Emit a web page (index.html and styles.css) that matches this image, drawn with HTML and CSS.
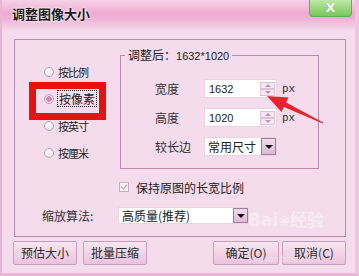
FILE: index.html
```html
<!DOCTYPE html>
<html lang="zh-CN">
<head>
    <meta charset="UTF-8">
    <title>调整图像大小</title>
    <link rel="stylesheet" href="styles.css">
</head>
<body>
<div class="window">
    <!-- Barra de título -->
    <div class="titlebar">
        <span class="title">调整图像大小</span>
        <span class="close">X</span>
    </div>

    <div class="content">
        <div class="group">
            <div class="top">
                <div class="modes">
                    <div class="radio"><span class="dot"></span><span class="txt">按比例</span></div>
                    <div class="radio on"><span class="dot"></span><span class="focus">按像素</span></div>
                    <div class="radio"><span class="dot"></span><span class="txt">按英寸</span></div>
                    <div class="radio"><span class="dot"></span><span class="txt">按厘米</span></div>
                </div>
                <div class="box">
                    <div class="legend">调整后：<span class="num">1632*1020</span></div>
                    <div class="rows">
                        <span class="lbl">宽度</span>
                        <div class="field"><span>1632</span><span class="spin"><i class="up"></i><i class="down"></i></span></div>
                        <span class="unit">px</span>

                        <span class="lbl">高度</span>
                        <div class="field"><span>1020</span><span class="spin"><i class="up"></i><i class="down"></i></span></div>
                        <span class="unit">px</span>

                        <span class="lbl">较长边</span>
                        <div class="select">常用尺寸<span class="drop"></span></div>
                    </div>
                </div>
            </div>
            <div class="keep"><span class="check"></span>保持原图的长宽比例</div>
            <div class="algo">
                <span class="algo-lbl">缩放算法:</span>
                <div class="select wide">高质量(推荐)<span class="drop"></span></div>
            </div>
        </div>

        <div class="buttons">
            <span class="btn">预估大小</span>
            <span class="btn">批量压缩</span>
            <span class="btn ok">确定(O)</span>
            <span class="btn">取消(C)</span>
        </div>
    </div>

    <!-- Anotaciones encima -->
    <div class="mark"></div>
    <svg class="arrow" width="359" height="276" viewBox="0 0 359 276">
        <polygon points="267,96 288.5,97.5 286.1,102.5 323.2,122.6 322.8,123.5 283.9,107 281.5,111.9" fill="#e8232b"/>
    </svg>
    <div class="watermark">
        <span class="wm-big">Bai<span class="paw">❀</span>经验</span>
        <span class="wm-small">jingyan.baidu.com</span>
    </div>
</div>
</body>
</html>
```

FILE: styles.css
```css
/* Estilos generales */
body {
    margin: 0;
    font-family: "Noto Sans CJK SC", "DejaVu Sans", sans-serif;
    font-size: 12px;
    color: #222;
}

.window {
    position: relative;
    width: 359px;
    height: 276px;
    box-sizing: border-box;
    background: #f4dcec;
    border-left: 2px solid #ebb3d4;
    border-right: 4px solid #efc4df;
    border-bottom: 3px solid #ebb6d6;
    overflow: hidden;
}

/* Barra de título */
.titlebar {
    display: flex;
    align-items: flex-start;
    height: 30px;
    background: linear-gradient(to bottom, #f7d3e7 0%, #efaad3 45%, #f0b4d7 65%, #f4d8ea 100%);
}
.title {
    padding: 6px 0 0 10px;
    font-size: 13px;
    font-weight: bold;
    line-height: 16px;
    color: #1a1a1a;
    text-shadow: 0 0 2px #fff, 0 0 3px #fff;
}
.close {
    margin-left: auto;
    margin-right: 3px;
    width: 43px;
    height: 17px;
    box-sizing: border-box;
    border: 1px solid #6da85b;
    border-top: none;
    border-radius: 0 0 4px 4px;
    background: linear-gradient(to bottom, #bde9a6, #78c65a);
    color: #fff;
    font: bold 13px/16px "DejaVu Sans", sans-serif;
    text-align: center;
    text-shadow: 0 0 1px #4b8a3c;
}

/* Contenido */
.content {
    padding: 9px 0 0 12px;
}
.group {
    width: 332px;
    height: 198px;
    box-sizing: border-box;
    border: 1px solid #b98aae;
    padding-top: 15px;
}
.top {
    display: flex;
}

/* Opciones de modo */
.modes {
    width: 105px;
    box-sizing: border-box;
    padding: 3px 0 0 29px;
}
.radio {
    display: flex;
    align-items: center;
    height: 27px;
}
.dot {
    width: 10px;
    height: 10px;
    box-sizing: border-box;
    margin-right: 4px;
    border: 1px solid #b9a5b6;
    border-radius: 50%;
    background: radial-gradient(circle at 40% 35%, #fff, #ead8e5);
}
.radio.on .dot {
    background: radial-gradient(circle, #d77fb6 0 2.5px, #f3e0ec 3px);
}
.txt {
    font-size: 11px;
    letter-spacing: -1px;
}
.focus {
    font-size: 12px;
    line-height: 15px;
    padding: 0 1px;
    outline: 1px dotted #222;
}

/* Grupo "调整后" */
.box {
    width: 199px;
    height: 114px;
    box-sizing: border-box;
    border: 1px solid #b98aae;
}
.legend {
    width: fit-content;
    margin: -8px 0 0 4px;
    padding: 0 3px;
    line-height: 14px;
    background: #f4dcec;
}
.num {
    font-family: "Liberation Sans", sans-serif;
    font-size: 11px;
}
.rows {
    display: grid;
    grid-template-columns: 44px 73px auto;
    grid-auto-rows: 19px;
    row-gap: 10px;
    column-gap: 5px;
    align-items: center;
    margin-top: 16px;
    padding-left: 34px;
}
.lbl {
    color: #333;
}
.field {
    display: flex;
    align-items: center;
    justify-content: space-between;
    height: 19px;
    box-sizing: border-box;
    padding-left: 4px;
    background: #fff;
    border: 1px solid #ead4e2;
    font-family: "Liberation Sans", sans-serif;
    font-size: 11px;
}
.spin {
    display: flex;
    flex-direction: column;
    margin-right: 1px;
}
.spin i {
    position: relative;
    width: 15px;
    height: 7px;
    box-sizing: border-box;
    border: 1px solid #dcc0d4;
    background: #f6e6f0;
}
.spin i::after {
    content: "";
    position: absolute;
    left: 4px;
    top: 1px;
    border-left: 3px solid transparent;
    border-right: 3px solid transparent;
}
.spin .up::after {
    border-bottom: 3px solid #b596ad;
}
.spin .down::after {
    border-top: 3px solid #b596ad;
}
.unit {
    font-family: "Liberation Mono", monospace;
    font-size: 11px;
    color: #333;
}

/* Listas desplegables */
.select {
    display: flex;
    align-items: center;
    justify-content: space-between;
    height: 19px;
    box-sizing: border-box;
    padding-left: 3px;
    background: #fff;
    border: 1px solid #ead4e2;
}
.drop {
    position: relative;
    width: 15px;
    height: 17px;
    box-sizing: border-box;
    border: 1px solid #9f7c9a;
    background: linear-gradient(to bottom, #f2dcec, #ddb8d3);
}
.drop::after {
    content: "";
    position: absolute;
    left: 3px;
    top: 6px;
    border-left: 4px solid transparent;
    border-right: 4px solid transparent;
    border-top: 4px solid #111;
}
.select.wide {
    width: 131px;
    height: 17px;
}
.select.wide .drop {
    height: 15px;
}
.select.wide .drop::after {
    top: 5px;
}

/* Casilla y algoritmo */
.keep {
    display: flex;
    align-items: center;
    height: 14px;
    margin-top: 11px;
    padding-left: 104px;
}
.check {
    position: relative;
    width: 10px;
    height: 10px;
    box-sizing: border-box;
    margin-right: 7px;
    border: 1px solid #c7abc0;
    background: #faf0f6;
}
.check::after {
    content: "";
    position: absolute;
    left: 2px;
    top: 0;
    width: 3px;
    height: 5px;
    border: solid #b99ab1;
    border-width: 0 1px 1px 0;
    transform: rotate(40deg);
}
.algo {
    display: flex;
    align-items: center;
    margin-top: 13px;
    padding-left: 27px;
}
.algo-lbl {
    width: 76px;
    color: #333;
}

/* Botones */
.buttons {
    display: flex;
    gap: 6px;
    width: 333px;
    margin: 4px 0 0 -1px;
}
.btn {
    width: 64px;
    height: 24px;
    box-sizing: border-box;
    border: 1px solid #c59fbb;
    border-radius: 2px;
    background: linear-gradient(to bottom, #f9e6f1, #ebc3de);
    text-align: center;
    line-height: 22px;
    color: #2a2a2a;
}
.btn.ok {
    width: 66px;
    margin-left: auto;
}
.buttons .btn:last-child {
    margin-left: -3px;
}

/* Anotaciones */
.mark {
    position: absolute;
    left: 27px;
    top: 82px;
    width: 77px;
    height: 38px;
    box-sizing: border-box;
    border: 7px solid #e51212;
}
.arrow {
    position: absolute;
    left: -2px;
    top: 0;
    pointer-events: none;
}
.watermark {
    position: absolute;
    left: 246px;
    top: 210px;
    display: flex;
    flex-direction: column;
    align-items: center;
    color: #fff;
    opacity: 0.4;
    pointer-events: none;
}
.wm-big {
    font: bold 17px/20px "DejaVu Sans", sans-serif;
}
.paw {
    font-size: 14px;
}
.wm-small {
    font: 8px/9px "DejaVu Sans", sans-serif;
    margin-top: 24px;
}
```
